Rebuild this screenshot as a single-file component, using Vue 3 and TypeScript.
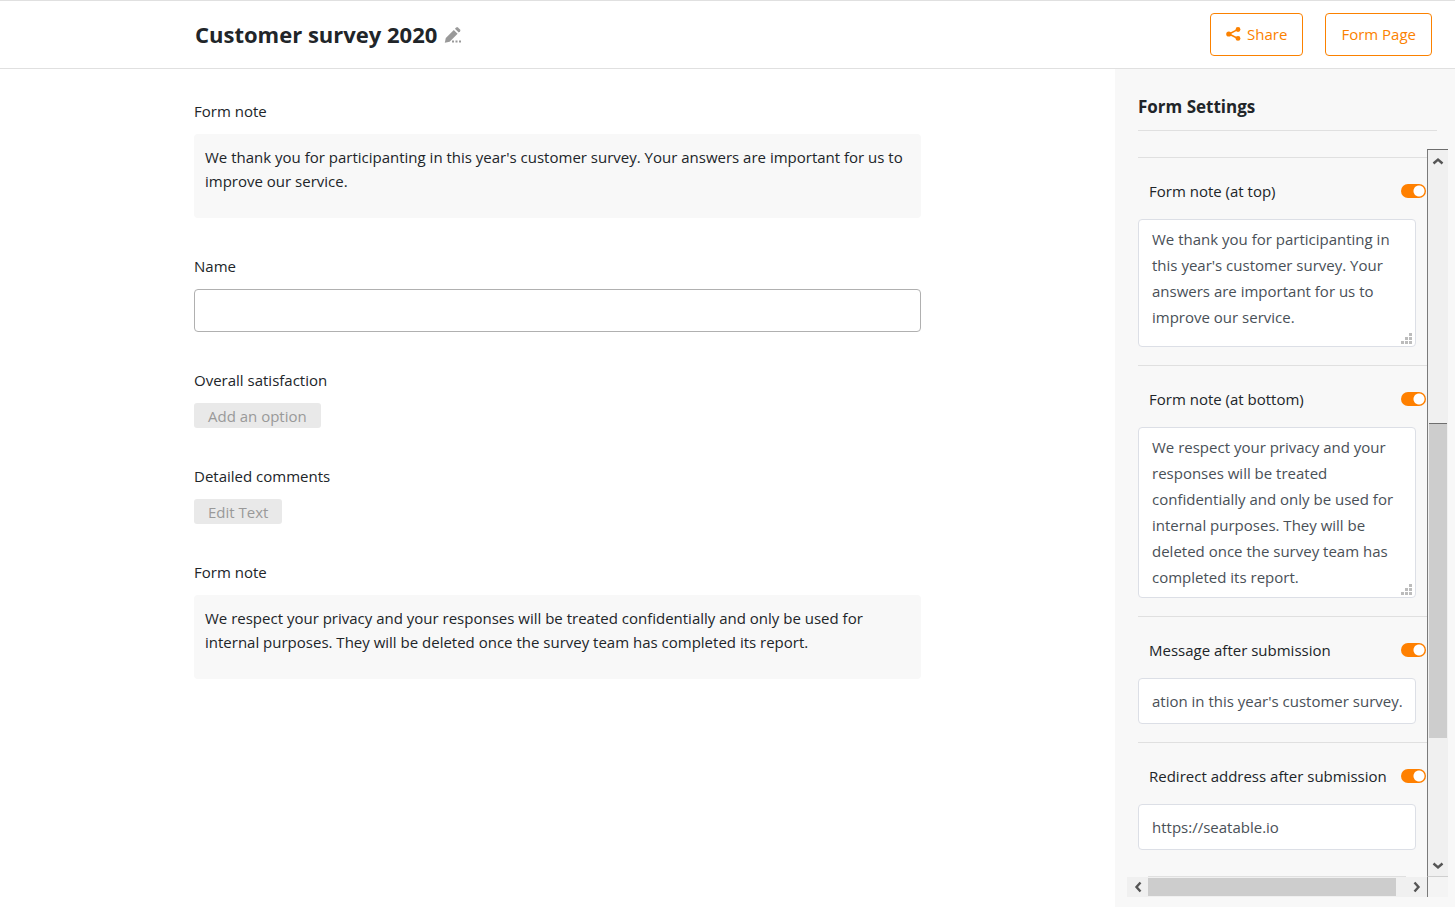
<script setup lang="ts">
import { ref } from 'vue'

interface Setting {
  id: string
  label: string
  kind: 'area' | 'text'
  enabled: boolean
  value: string
  size: string
}

const topNote =
  "We thank you for participanting in this year's customer survey. Your answers are important for us to improve our service."
const bottomNote =
  'We respect your privacy and your responses will be treated confidentially and only be used for internal purposes. They will be deleted once the survey team has completed its report.'

const name = ref('')
const settings = ref<Setting[]>([
  { id: 'note-top', label: 'Form note (at top)', kind: 'area', enabled: true, value: topNote, size: 'short' },
  { id: 'note-bottom', label: 'Form note (at bottom)', kind: 'area', enabled: true, value: bottomNote, size: 'tall' },
  { id: 'message', label: 'Message after submission', kind: 'text', enabled: true, value: "ation in this year's customer survey.", size: 'tail' },
  { id: 'redirect', label: 'Redirect address after submission', kind: 'text', enabled: true, value: 'https://seatable.io', size: 'line' },
])
</script>

<template>
  <div class="app">
    <header class="header">
      <h1 class="title">Customer survey 2020</h1>
      <button class="edit" type="button" aria-label="Rename form">
        <svg width="18" height="18" viewBox="0 0 18 18" fill="#999">
          <path d="M.8 16.8 1.8 11.9 9.8 3.9 13.6 7.7 5.6 15.7Z" />
          <path d="M10.9 2.8 12.3 1.4Q13.1.7 13.9 1.4L16.1 3.6Q16.8 4.4 16.1 5.2L14.7 6.6Z" />
          <path d="M8 14.6h2v2H8zM11.5 14.6h2v2h-2zM15 14.6h2v2h-2z" />
        </svg>
      </button>
      <div class="actions">
        <button class="action" type="button">
          <svg width="15" height="14" viewBox="0 0 15 14">
            <path d="M12 2.4 3 7l9 4.5" fill="none" stroke="currentColor" stroke-width="1.6" />
            <circle cx="2.8" cy="7" r="2.6" fill="currentColor" />
            <circle cx="12" cy="2.5" r="2.4" fill="currentColor" />
            <circle cx="12" cy="11.4" r="2.4" fill="currentColor" />
          </svg>
          <span>Share</span>
        </button>
        <button class="action" type="button">Form Page</button>
      </div>
    </header>

    <div class="body">
      <main class="main">
        <form class="form" @submit.prevent>
          <section class="field">
            <h2 class="caption">Form note</h2>
            <p class="note">{{ topNote }}</p>
          </section>
          <section class="field">
            <label class="caption" for="name">Name</label>
            <input id="name" v-model="name" class="name" type="text" />
          </section>
          <section class="field">
            <h2 class="caption">Overall satisfaction</h2>
            <button class="chip" type="button">Add an option</button>
          </section>
          <section class="field">
            <h2 class="caption">Detailed comments</h2>
            <button class="chip" type="button">Edit Text</button>
          </section>
          <section class="field">
            <h2 class="caption">Form note</h2>
            <p class="note">{{ bottomNote }}</p>
          </section>
        </form>
      </main>

      <aside class="panel">
        <h2 class="panel-title">Form Settings</h2>
        <div class="scroller">
          <div class="settings">
            <section v-for="s in settings" :key="s.id" class="setting">
              <div class="row">
                <label :for="s.id + '-on'">{{ s.label }}</label>
                <input :id="s.id + '-on'" v-model="s.enabled" class="switch" type="checkbox" role="switch" />
              </div>
              <div class="control">
                <template v-if="s.kind === 'area'">
                  <textarea v-model="s.value" :class="s.size" :aria-label="s.label"></textarea>
                  <svg class="grip" width="11" height="11" viewBox="0 0 11 11" fill="#bcbcbc">
                    <path d="M8 0h3v3H8zM4 4h3v3H4zM8 4h3v3H8zM0 8h3v3H0zM4 8h3v3H4zM8 8h3v3H8z" />
                  </svg>
                </template>
                <input v-else v-model="s.value" :class="s.size" type="text" :aria-label="s.label" />
              </div>
            </section>
            <hr class="end" />
          </div>
          <div class="vbar">
            <button class="arrow" type="button" aria-label="Scroll up">
              <svg width="12" height="8" viewBox="0 0 12 8"><path d="M1.5 6.5 6 2.5l4.5 4" /></svg>
            </button>
            <div class="vtrack"><div class="vthumb"></div></div>
            <button class="arrow" type="button" aria-label="Scroll down">
              <svg width="12" height="8" viewBox="0 0 12 8"><path d="M1.5 1.5 6 5.5l4.5-4" /></svg>
            </button>
          </div>
          <div class="hbar">
            <button class="arrow" type="button" aria-label="Scroll left">
              <svg width="8" height="12" viewBox="0 0 8 12"><path d="M6.5 1.5 2.5 6l4 4.5" /></svg>
            </button>
            <div class="htrack"><div class="hthumb"></div></div>
            <button class="arrow" type="button" aria-label="Scroll right">
              <svg width="8" height="12" viewBox="0 0 8 12"><path d="M1.5 1.5 5.5 6l-4 4.5" /></svg>
            </button>
          </div>
          <div class="corner"></div>
        </div>
      </aside>
    </div>
  </div>
</template>

<style>
body {
  background: #fff;
}
</style>

<style scoped>
* {
  box-sizing: border-box;
}

.app {
  display: flex;
  flex-direction: column;
  min-height: 100vh;
  color: #212529;
  font: 15px/24px "Segoe UI", "Open Sans", "Noto Sans", sans-serif;
}

button,
input,
textarea {
  margin: 0;
  font: inherit;
}

h1,
h2,
p {
  margin: 0;
}

svg {
  display: block;
}

.header {
  display: flex;
  align-items: center;
  height: 69px;
  padding: 0 23px 0 195px;
  border-top: 1px solid #e0e0e0;
  border-bottom: 1px solid #e0e0e0;
}

.title {
  padding-bottom: 2px;
  font-size: 22px;
  line-height: 32px;
  font-weight: 700;
}

.edit {
  margin-left: 7px;
  padding: 0;
  border: 0;
  background: none;
}

.actions {
  display: flex;
  gap: 22px;
  margin-left: auto;
}

.action {
  display: flex;
  align-items: center;
  gap: 6px;
  height: 43px;
  padding: 0 15px 2px;
  border: 1px solid #fb8100;
  border-radius: 4px;
  background: #fff;
  color: #fb8100;
}

.body {
  display: flex;
  flex: 1;
}

.main {
  flex: 1;
  min-width: 0;
  padding: 30px 24px;
}

.form {
  display: flex;
  flex-direction: column;
  gap: 36px;
  max-width: 727px;
  margin: 0 auto;
}

.field {
  display: flex;
  flex-direction: column;
  align-items: flex-start;
  gap: 11px;
}

.caption {
  font-size: 15px;
  line-height: 24px;
  font-weight: 400;
}

.note {
  width: 100%;
  min-height: 84px;
  padding: 11px;
  border-radius: 4px;
  background: #f8f8f8;
}

.name {
  width: 100%;
  height: 43px;
  padding: 0 12px;
  border: 1px solid #b0b0b0;
  border-radius: 4px;
}

.chip {
  height: 25px;
  padding: 0 14px;
  border: 0;
  border-radius: 3px;
  background: #e9e9e9;
  color: #999;
}

.panel {
  display: flex;
  flex-direction: column;
  width: 340px;
  padding: 26px 7px 10px 12px;
  background: #f8f8f8;
}

.panel-title {
  margin: 0 11px 18px;
  padding-bottom: 11px;
  border-bottom: 1px solid #e0e0e0;
  font-size: 17px;
  line-height: 24px;
  font-weight: 700;
}

.scroller {
  display: grid;
  flex: 1;
  grid-template-columns: minmax(0, 1fr) 21px;
  grid-template-rows: 1fr 20px;
}

.settings {
  display: flex;
  flex-direction: column;
  padding: 8px 0 0 11px;
}

.setting {
  padding: 21px 0 18px;
  border-top: 1px solid #e0e0e0;
}

.end {
  width: 258px;
  margin: auto 21px 0 10px;
  border: 0;
  border-top: 1px solid #e0e0e0;
}

.row {
  display: flex;
  align-items: center;
  justify-content: space-between;
  margin-bottom: 16px;
  padding: 0 1px 0 11px;
}

.switch {
  appearance: none;
  width: 25px;
  height: 14px;
  border-radius: 7px;
  background: #ccc radial-gradient(circle at 7px 7px, #fff 5px, transparent 6px);
}

.switch:checked {
  background: #ff8000 radial-gradient(circle at 18px 7px, #fff 5px, transparent 6px);
}

.control {
  position: relative;
  margin-right: 11px;
}

.control textarea,
.control input {
  display: block;
  width: 100%;
  padding: 6px 13px;
  border: 1px solid #dcdfe6;
  border-radius: 4px;
  background: #fff;
  color: #495057;
  line-height: 26px;
  resize: none;
  overflow: hidden;
}

.control .short {
  height: 128px;
}

.control .tall {
  height: 171px;
}

.control .line,
.control .tail {
  height: 46px;
}

.control .tail {
  text-align: right;
}

.grip {
  position: absolute;
  right: 4px;
  bottom: 3px;
}

.vbar {
  display: flex;
  flex-direction: column;
  border-top: 1px solid #6e6e6e;
  border-left: 1px solid #7a7a7a;
  border-bottom: 1px solid #cfcfcf;
  background: #f0f0f0;
}

.vtrack {
  display: grid;
  flex: 1;
  grid-template-rows: 253fr 316fr 117fr;
}

.vthumb {
  grid-row: 2;
  margin: 0 1px;
  border-top: 1px solid #6e6e6e;
  background: #cdcdcd;
}

.hbar {
  display: flex;
  background: #f0f0f0;
}

.htrack {
  display: grid;
  flex: 1;
  grid-template-columns: 248fr 10fr;
}

.hthumb {
  margin: 1px 0;
  background: #cdcdcd;
}

.corner {
  border-left: 1px solid #7a7a7a;
  background: #f4f4f4;
}

.arrow {
  display: grid;
  place-items: center;
  flex: 0 0 21px;
  height: 20px;
  padding: 0;
  border: 0;
  background: none;
}

.arrow path {
  fill: none;
  stroke: #555;
  stroke-width: 2.4;
}
</style>
